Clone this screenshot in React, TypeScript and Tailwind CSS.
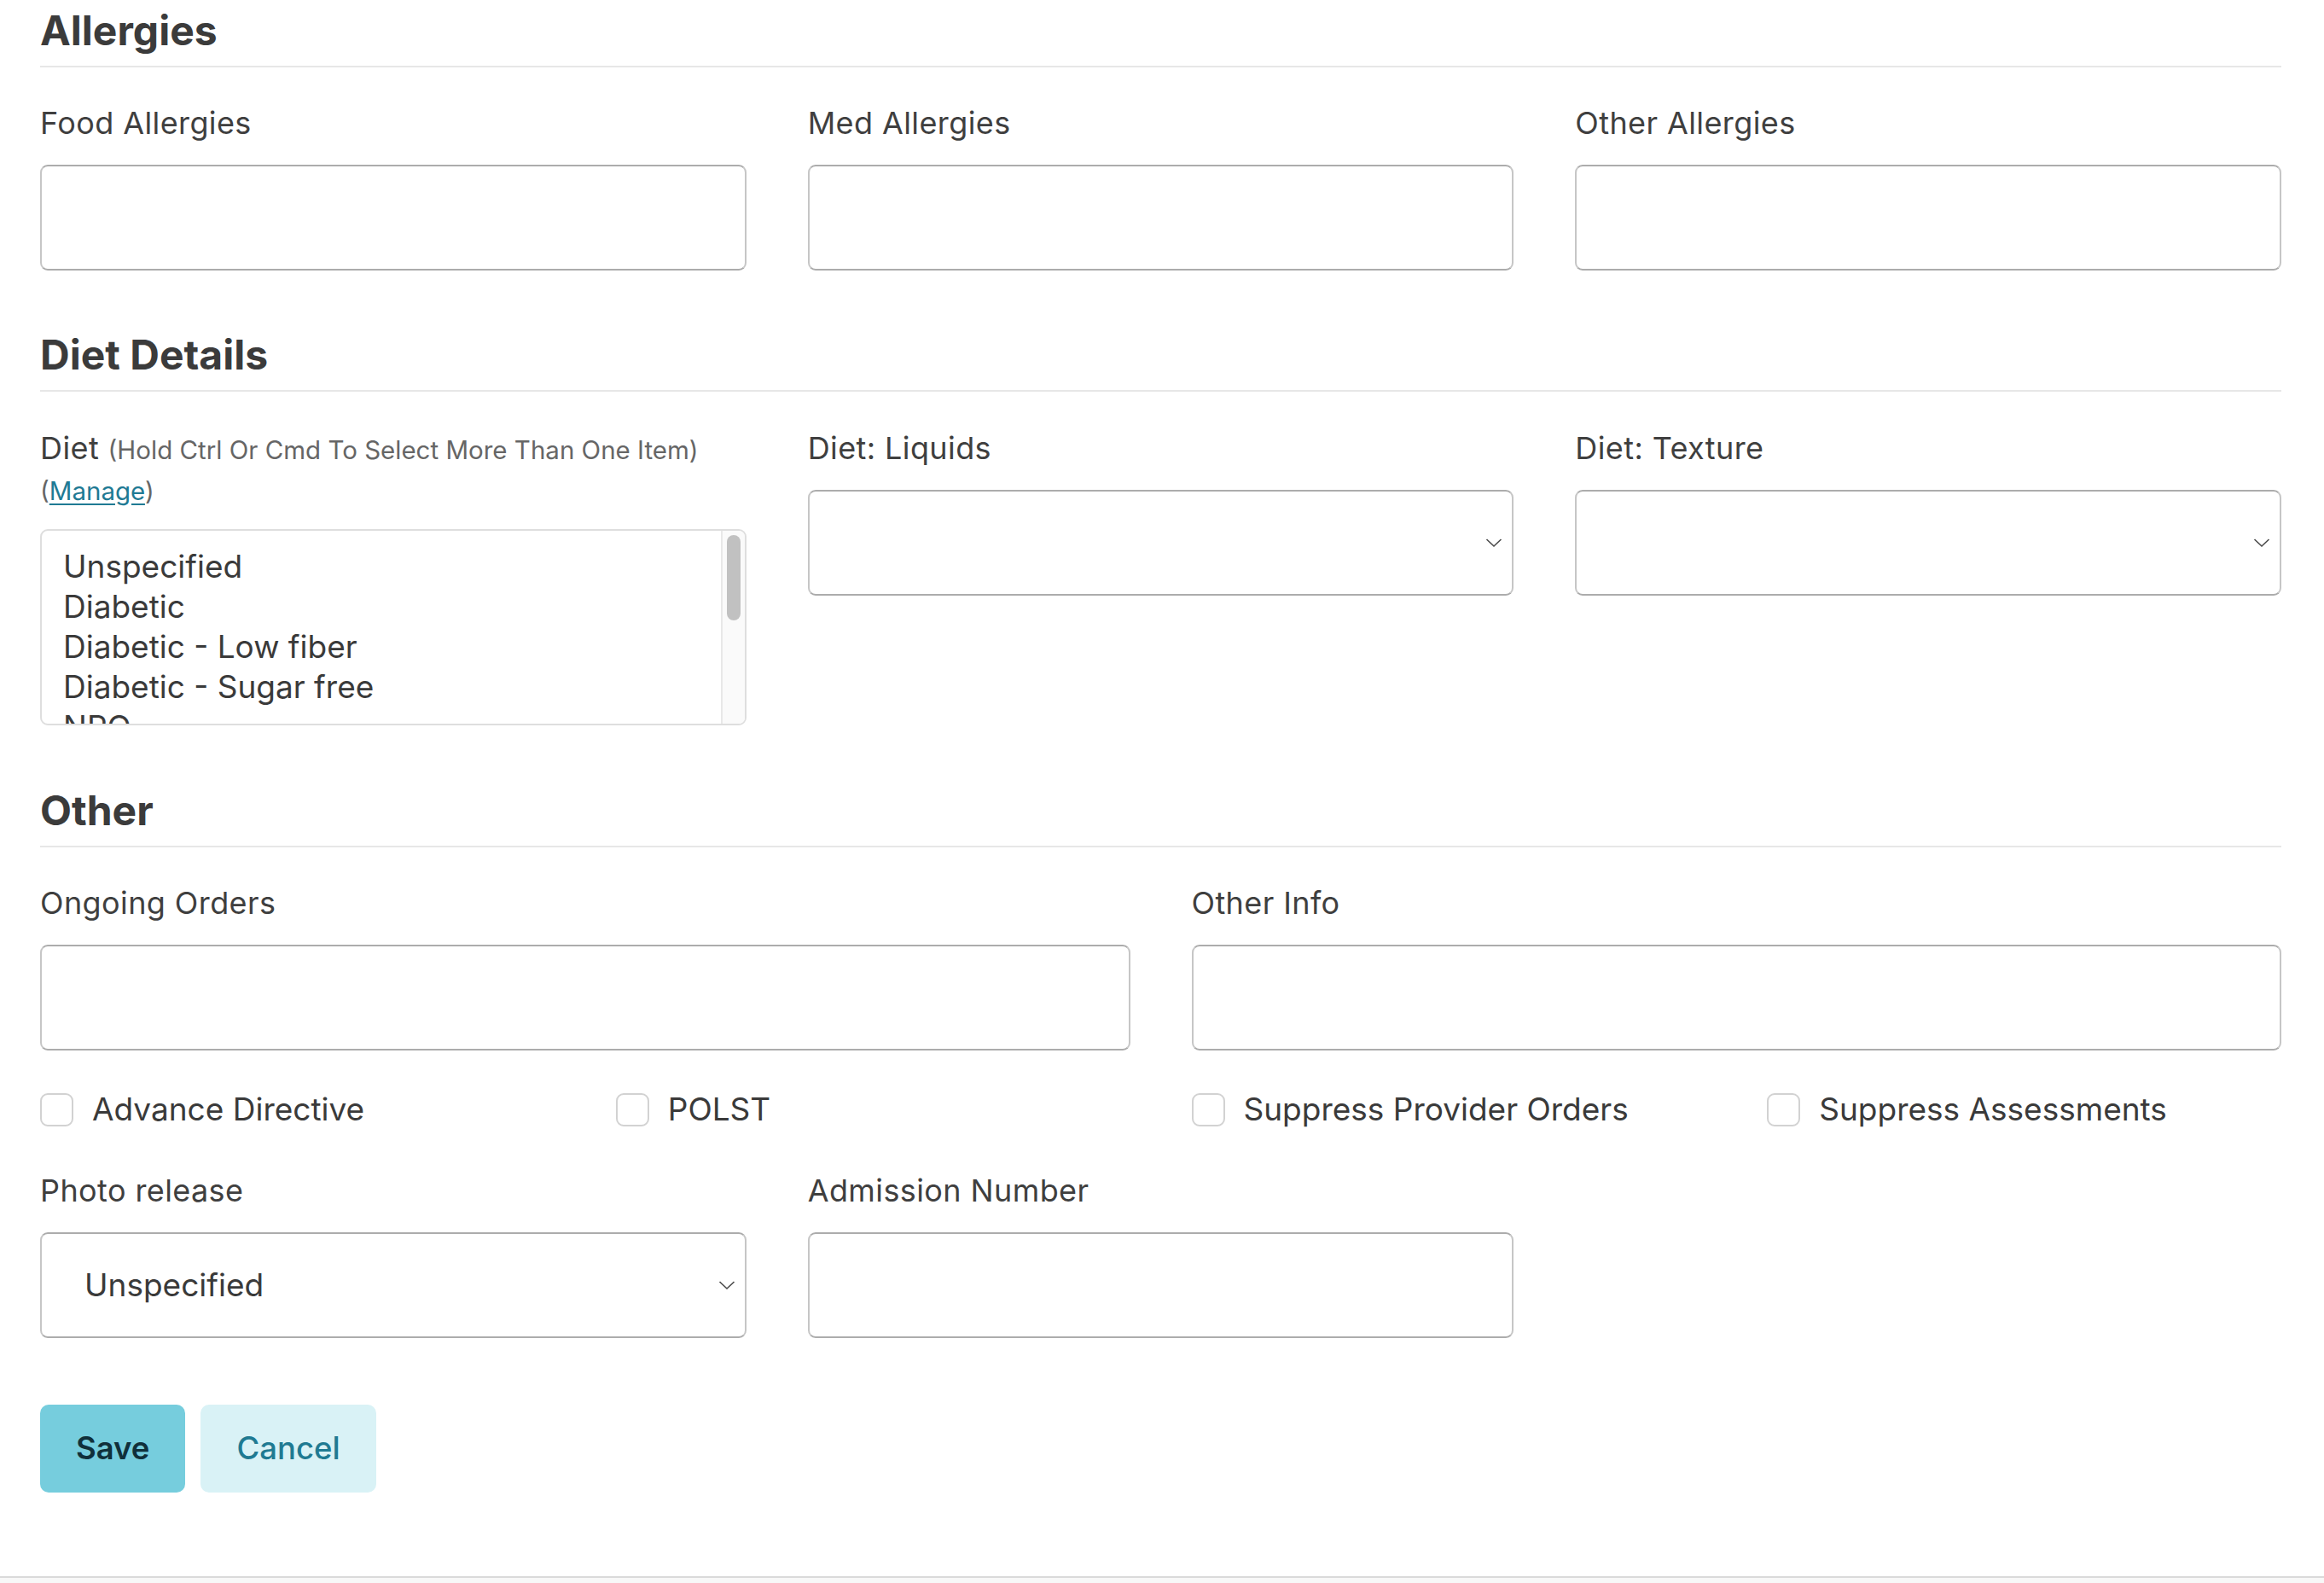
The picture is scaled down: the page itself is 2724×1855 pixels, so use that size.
import React from "react";

const dietOptions = [
  "Unspecified",
  "Diabetic",
  "Diabetic - Low fiber",
  "Diabetic - Sugar free",
  "NPO",
  "Regular",
];

const checks = [
  "Advance Directive",
  "POLST",
  "Suppress Provider Orders",
  "Suppress Assessments",
];

function SectionHeading({ title, className = "" }: { title: string; className?: string }) {
  return (
    <h2
      className={`text-[48px] leading-[59px] font-bold text-[#3b3b3b] pb-[12px] border-b-2 border-[#e7e7e7] ${className}`}
    >
      {title}
    </h2>
  );
}

function Label({ children }: { children: React.ReactNode }) {
  return (
    <label className="block text-[36px] tracking-[0.4px] leading-[48px] text-[#3f3f3f] mb-[25px]">{children}</label>
  );
}

function TextBox() {
  return (
    <input
      type="text"
      className="block w-full h-[124px] rounded-[9px] border-2 border-[#c6c6c6] border-t-[#acacac] border-b-[#acacac] bg-white px-[24px] text-[37px] outline-none"
    />
  );
}

function Chevron() {
  return (
    <svg width="20" height="11" viewBox="0 0 20 11" fill="none">
      <polyline points="1.5,1.5 10,9.5 18.5,1.5" stroke="#4a4a4a" strokeWidth="1.6" />
    </svg>
  );
}

function SelectBox({ value = "" }: { value?: string }) {
  return (
    <div className="relative h-[124px] rounded-[9px] border-2 border-[#c6c6c6] border-t-[#acacac] border-b-[#acacac] bg-white flex items-center pl-[50px] pr-[44px]">
      <span className="text-[37px] text-[#3a3a3a]">{value}</span>
      <span className="absolute right-[11px] top-1/2 -translate-y-1/2 flex">
        <Chevron />
      </span>
    </div>
  );
}

function DietList() {
  return (
    <div className="h-[230px] rounded-[9px] border-2 border-[#dedede] bg-white flex overflow-hidden">
      <div className="flex-1 pl-[25px] pt-[18px] overflow-hidden">
        {dietOptions.map((o) => (
          <div key={o} className="text-[37px] leading-[47px] text-[#3a3a3a] whitespace-nowrap">
            {o}
          </div>
        ))}
      </div>
      <div className="w-[28px] border-l-2 border-[#e8e8e8] bg-[#fafafa] pt-[5px] flex justify-center">
        <div className="w-[16px] h-[100px] rounded-full bg-[#c1c1c1]" />
      </div>
    </div>
  );
}

export default function App() {
  return (
    <div className="min-h-screen bg-white font-['Inter','Noto_Sans',sans-serif] text-[#3f3f3f]">
      <div className="pl-[47px] pr-[50px] pt-[6px] pb-[98px]">
        <SectionHeading title="Allergies" />
        <div className="grid grid-cols-3 gap-x-[72px] mt-[41px]">
          <div>
            <Label>Food Allergies</Label>
            <TextBox />
          </div>
          <div>
            <Label>Med Allergies</Label>
            <TextBox />
          </div>
          <div>
            <Label>Other Allergies</Label>
            <TextBox />
          </div>
        </div>

        <SectionHeading title="Diet Details" className="mt-[69px]" />
        <div className="grid grid-cols-3 gap-x-[72px] mt-[42px] items-start">
          <div>
            <div className="text-[36px] tracking-[0.4px] leading-[48px] text-[#3f3f3f] mb-[21px]">
              <div className="whitespace-nowrap">
                Diet{" "}
                <span className="text-[29.5px] tracking-normal text-[#666666]">
                  (Hold Ctrl Or Cmd To Select More Than One Item)
                </span>
              </div>
              <div className="text-[29.5px] tracking-normal text-[#666666]">
                (<a href="#" className="text-[#1f7a94] underline underline-offset-[4px]">Manage</a>)
              </div>
            </div>
            <DietList />
          </div>
          <div>
            <Label>Diet: Liquids</Label>
            <SelectBox />
          </div>
          <div>
            <Label>Diet: Texture</Label>
            <SelectBox />
          </div>
        </div>

        <SectionHeading title="Other" className="mt-[70px]" />
        <div className="grid grid-cols-2 gap-x-[72px] mt-[41px]">
          <div>
            <Label>Ongoing Orders</Label>
            <TextBox />
          </div>
          <div>
            <Label>Other Info</Label>
            <TextBox />
          </div>
        </div>

        <div className="grid grid-cols-4 gap-x-[72px] mt-[45px]">
          {checks.map((c) => (
            <label key={c} className="flex items-center gap-[22px] h-[48px]">
              <span className="w-[39px] h-[39px] rounded-[9px] border-2 border-[#d2d2d2] bg-white shrink-0" />
              <span className="text-[37px] leading-[48px] text-[#3a3a3a] whitespace-nowrap">{c}</span>
            </label>
          ))}
        </div>

        <div className="grid grid-cols-3 gap-x-[72px] mt-[47px]">
          <div>
            <Label>Photo release</Label>
            <SelectBox value="Unspecified" />
          </div>
          <div>
            <Label>Admission Number</Label>
            <TextBox />
          </div>
        </div>

        <div className="flex gap-[18px] mt-[78px]">
          <button className="h-[103px] px-[42px] rounded-[10px] bg-[#76cddd] text-[36.5px] font-semibold text-[#10303a]">
            Save
          </button>
          <button className="h-[103px] px-[42px] rounded-[10px] bg-[#d9f2f6] text-[36.5px] font-medium text-[#1f7a92]">
            Cancel
          </button>
        </div>
      </div>
      <div className="h-[9px] border-t-2 border-[#dadada] bg-[#f8f8f8]" />
    </div>
  );
}
